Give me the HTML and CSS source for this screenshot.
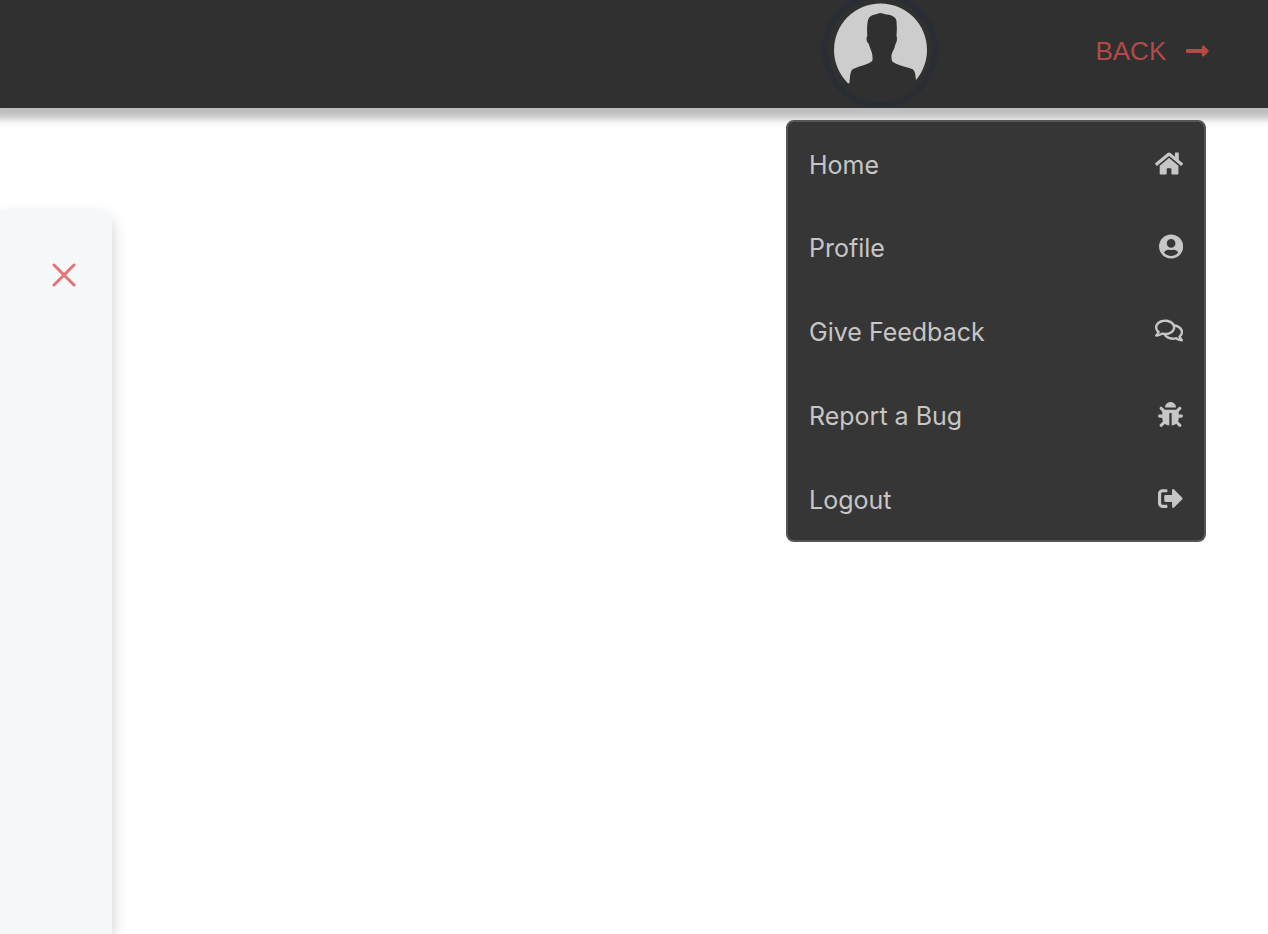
FILE: index.html
```html
<!DOCTYPE html>
<html lang="en">
<head>
<meta charset="utf-8">
<meta name="viewport" content="width=device-width, initial-scale=1">
<title>Account menu</title>
<link rel="stylesheet" href="styles.css">
</head>
<body class="page">
<header class="topbar">
  <button class="avatar" type="button" aria-label="Account menu" aria-expanded="true" aria-controls="account-menu">
    <svg class="avatar-image" viewBox="0 0 116 116" aria-hidden="true">
      <circle cx="58.500" cy="58" r="46.500" fill="#cdcdcd"/>
      <path fill="#303030" d="M27.500 91C28 86 28 79 30.700 77.300C36 74 46 73 50.300 69C51 66 50.500 61 48.500 57L46.500 51.500C44.500 50 44 46 45.300 44C45 39 45 34 45.500 31C46 26 48 24 51 23C54 22.500 56 21.500 58 21C60 21 62 22 64 22.500C69 22.500 74 25 74.500 29C75 34 75 39 74.500 44C75.500 46 75 50 73.500 52C73 56 70 60 69.500 63C69.500 66 69.500 68 70.300 69.500C76 74 86 75 90.700 77.300C93.500 79.500 93.500 84 94 88L104 96V108H16V96Z"/>
      <circle cx="58" cy="58" r="55" fill="none" stroke="#2a2d34" stroke-width="6"/>
    </svg>
  </button>
  <a class="back" href="#">BACK
    <svg class="icon" viewBox="0 0 448 512" aria-hidden="true"><path d="M313.941 216H12c-6.627 0-12 5.373-12 12v56c0 6.627 5.373 12 12 12h301.941v46.059c0 21.382 25.851 32.090 40.971 16.971l86.059-86.059c9.373-9.373 9.373-24.569 0-33.941l-86.059-86.059c-15.119-15.119-40.971-4.411-40.971 16.971V216z"/></svg>
  </a>
  <nav class="menu" id="account-menu" aria-label="Account">
    <a class="menu-item" href="#"><span class="menu-label">Home</span>
      <svg class="icon" viewBox="0 0 576 512" aria-hidden="true"><path d="M280.370 148.260L96 300.110V464a16 16 0 0 0 16 16l112.060-.290a16 16 0 0 0 15.920-16V368a16 16 0 0 1 16-16h64a16 16 0 0 1 16 16v95.640a16 16 0 0 0 16 16.050L464 480a16 16 0 0 0 16-16V300L295.670 148.260a12.190 12.190 0 0 0-15.300 0zM571.600 251.470L488 182.560V44.050a12 12 0 0 0-12-12h-56a12 12 0 0 0-12 12v72.610L318.470 43a48 48 0 0 0-61 0L4.340 251.470a12 12 0 0 0-1.600 16.900l25.500 31A12 12 0 0 0 45.150 301l235.220-193.740a12.190 12.190 0 0 1 15.300 0L530.900 301a12 12 0 0 0 16.900-1.600l25.500-31a12 12 0 0 0-1.700-16.930z"/></svg>
    </a>
    <a class="menu-item" href="#"><span class="menu-label">Profile</span>
      <svg class="icon" viewBox="0 0 496 512" aria-hidden="true"><path d="M248 8C111 8 0 119 0 256s111 248 248 248 248-111 248-248S385 8 248 8zm0 96c48.600 0 88 39.400 88 88s-39.400 88-88 88-88-39.400-88-88 39.400-88 88-88zm0 344c-58.700 0-111.300-26.600-146.500-68.200 18.800-35.400 55.600-59.800 98.500-59.800 2.400 0 4.800.4 7.100 1.100 13 4.200 26.600 6.900 40.900 6.900 14.300 0 28-2.700 40.900-6.900 2.300-.7 4.700-1.100 7.100-1.100 42.900 0 79.700 24.400 98.500 59.800C359.300 421.400 306.700 448 248 448z"/></svg>
    </a>
    <a class="menu-item" href="#"><span class="menu-label">Give Feedback</span>
      <svg class="icon" viewBox="0 0 576 512" aria-hidden="true"><path d="M532 386.200c27.500-27.100 44-61.100 44-98.200 0-80-76.500-146.100-176.200-157.900C368.300 72.500 294.300 32 208 32 93.100 32 0 103.600 0 192c0 37 16.500 71 44 98.200-15.300 30.700-37.300 54.500-37.700 54.900-6.300 6.700-8.100 16.500-4.400 25 3.600 8.500 12 14 21.200 14 53.500 0 96.700-20.200 125.200-38.800 9.200 2.100 18.700 3.700 28.400 4.900C208.100 407.600 281.800 448 368 448c20.800 0 40.800-2.400 59.800-6.800C456.300 459.700 499.400 480 553 480c9.200 0 17.500-5.500 21.200-14 3.600-8.500 1.900-18.300-4.400-25-.4-.3-22.500-24.100-37.800-54.800zm-392.800-92.300L122.100 305c-14.100 9.100-28.500 16.300-43.100 21.400 2.700-4.700 5.400-9.700 8-14.800l15.500-31.100L77.700 256C64.200 242.600 48 220.700 48 192c0-60.700 73.300-112 160-112s160 51.300 160 112-73.300 112-160 112c-16.500 0-33-1.900-49-5.600l-19.800-4.500zM498.300 352l-24.700 24.400 15.500 31.100c2.600 5.100 5.300 10.100 8 14.800-14.600-5.100-29-12.300-43.100-21.400l-17.100-11.100-19.900 4.600c-16 3.700-32.500 5.600-49 5.600-54 0-102.200-20.100-131.300-49.700C338 339.500 416 272.900 416 192c0-3.400-.4-6.700-.7-10C479.700 196.500 528 238.800 528 288c0 28.700-16.200 50.600-29.700 64z"/></svg>
    </a>
    <a class="menu-item" href="#"><span class="menu-label">Report a Bug</span>
      <svg class="icon" viewBox="0 0 512 512" aria-hidden="true"><path d="M511.988 288.900c-.478 17.430-15.217 31.100-32.653 31.100H424v16c0 21.864-4.882 42.584-13.600 61.145l60.228 60.228c12.496 12.497 12.496 32.758 0 45.255-12.498 12.497-32.759 12.496-45.256 0l-54.736-54.736C345.886 467.965 314.351 480 280 480V236c0-6.627-5.373-12-12-12h-24c-6.627 0-12 5.373-12 12v244c-34.351 0-65.886-12.035-90.636-32.108l-54.736 54.736c-12.498 12.497-32.759 12.496-45.256 0-12.496-12.497-12.496-32.758 0-45.255l60.228-60.228C92.882 378.584 88 357.864 88 336v-16H32.666C15.230 320 .491 306.330.013 288.900-.484 270.816 14.028 256 32 256h56v-58.745l-46.628-46.628c-12.496-12.497-12.496-32.758 0-45.255 12.498-12.497 32.758-12.497 45.256 0L141.255 160h229.489l54.627-54.627c12.498-12.497 32.758-12.497 45.256 0 12.496 12.497 12.496 32.758 0 45.255L424 197.255V256h56c17.972 0 32.484 14.816 31.988 32.900zM257 0c-61.856 0-112 50.144-112 112h224C369 50.144 318.856 0 257 0z"/></svg>
    </a>
    <a class="menu-item" href="#"><span class="menu-label">Logout</span>
      <svg class="icon" viewBox="0 0 512 512" aria-hidden="true"><path d="M497 273L329 441c-15 15-41 4.500-41-17v-96H152c-13.300 0-24-10.700-24-24v-96c0-13.300 10.700-24 24-24h136V88c0-21.400 25.900-32 41-17l168 168c9.300 9.400 9.300 24.600 0 34zM192 436v-40c0-6.600-5.400-12-12-12H96c-17.700 0-32-14.300-32-32V160c0-17.700 14.300-32 32-32h84c6.600 0 12-5.400 12-12V76c0-6.600-5.400-12-12-12H96c-53 0-96 43-96 96v192c0 53 43 96 96 96h84c6.600 0 12-5.400 12-12z"/></svg>
    </a>
  </nav>
</header>
<main class="content">
  <section class="panel" aria-label="Panel">
    <button class="close" type="button" aria-label="Close">
      <svg class="close-icon" viewBox="0 0 24 24" aria-hidden="true"><path d="M2 2L22 22M22 2L2 22"/></svg>
    </button>
  </section>
</main>
</body>
</html>
```
FILE: styles.css
```css
* {
  box-sizing: border-box;
}

.page {
  margin: 0;
  min-height: 100vh;
  display: flex;
  flex-direction: column;
  background: #fff;
  font-family: Inter, "Liberation Sans", sans-serif;
}

.topbar {
  position: relative;
  z-index: 1;
  display: flex;
  justify-content: flex-end;
  align-items: flex-end;
  gap: 157px;
  height: 108px;
  padding-right: 59px;
  background: #303030;
  box-shadow: 0 3px 8px 8px rgba(0, 0, 0, 0.26);
}

.avatar {
  flex: none;
  padding: 0;
  border: 0;
  border-radius: 50%;
  background: none;
  cursor: pointer;
}

.avatar-image {
  display: block;
  width: 116px;
  height: 116px;
}

.back {
  align-self: center;
  display: flex;
  align-items: center;
  gap: 20px;
  padding-bottom: 6px;
  color: #b34a46;
  font-family: "Liberation Sans", Arial, sans-serif;
  font-size: 26px;
  line-height: 32px;
  text-decoration: none;
}

.icon {
  flex: none;
  height: 1em;
  fill: currentColor;
}

.menu {
  position: absolute;
  top: 120px;
  right: 62px;
  width: 420px;
  border: 2px solid #555657;
  border-radius: 8px;
  background: #363636;
}

.menu-item {
  display: flex;
  align-items: center;
  justify-content: space-between;
  height: 84px;
  padding: 0 21px;
  color: #c6c6c6;
  font-size: 25px;
  line-height: 32px;
  text-decoration: none;
}

.menu-label {
  padding-top: 3px;
}

.menu-item:first-child {
  height: 82px;
}

.content {
  flex: 1;
  display: flex;
  padding-top: 101px;
}

.panel {
  display: flex;
  align-items: flex-start;
  justify-content: flex-end;
  width: 112px;
  padding: 54px 36px;
  border-top-right-radius: 12px;
  background: #f5f7f9;
  box-shadow: 0 8px 16px rgba(0, 0, 0, 0.2);
}

.close {
  padding: 0;
  border: 0;
  background: none;
  color: #e57373;
  cursor: pointer;
}

.close-icon {
  display: block;
  width: 24px;
  height: 24px;
  fill: none;
  stroke: currentColor;
  stroke-width: 3;
  stroke-linecap: round;
}
```
